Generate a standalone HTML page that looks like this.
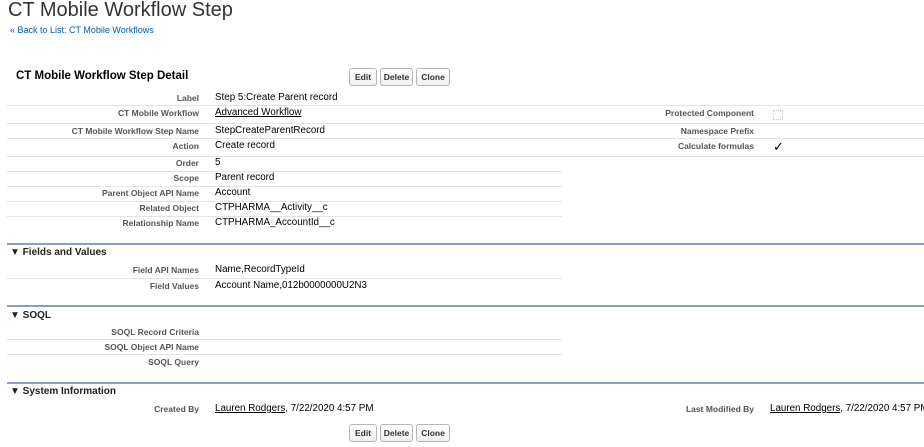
<!DOCTYPE html>
<html><head><style>
body{margin:0;width:924px;height:447px;background:#fff;font-family:"Liberation Sans",Arial,sans-serif;position:relative;overflow:hidden}
div,a,span{position:absolute;white-space:nowrap}
.t{left:8px;top:-1px;font-size:20px;color:#333}
.bk{left:10px;top:25px;font-size:9px;color:#015ba7}
.h{font-size:11.5px;font-weight:bold;color:#000}
.btn{height:16px;border:1px solid #b5b5b5;border-radius:3px;background:linear-gradient(#fff,#f0f0f0);font-size:8.5px;font-weight:bold;color:#333;text-align:center;line-height:16px;box-sizing:content-box}
.l{font-size:8.5px;font-weight:bold;color:#555;text-align:right}
.v{font-size:9.8px;color:#000}
.u{text-decoration:underline}
.ln{height:1px;background:#e3e3e7}
.bar{left:7px;right:0;height:2px;background:#8a9ebe}
.sh{left:10px;font-size:10px;font-weight:bold;color:#222}
</style></head><body>
<div class="t">CT Mobile Workflow Step</div>
<div class="bk">« Back to List: CT Mobile Workflows</div>

<div class="h" style="left:16px;top:70px">CT Mobile Workflow Step Detail</div>
<div class="btn" style="left:349px;top:68px;width:26px">Edit</div>
<div class="btn" style="left:380px;top:68px;width:31px">Delete</div>
<div class="btn" style="left:416px;top:68px;width:32px">Clone</div>

<div class="l" style="right:725px;top:93px">Label</div><div class="v" style="left:215px;top:92px">Step 5:Create Parent record</div>
<div class="ln" style="left:7px;right:0;top:105px"></div>
<div class="l" style="right:725px;top:108px">CT Mobile Workflow</div><div class="v u" style="left:215px;top:107px">Advanced Workflow</div>
<div class="l" style="right:170px;top:108px">Protected Component</div>
<div style="left:773px;top:110px;width:8px;height:8px;border:1px dotted #ccc"></div>
<div class="ln" style="left:7px;right:0;top:123px"></div>
<div class="l" style="right:725px;top:126px">CT Mobile Workflow Step Name</div><div class="v" style="left:215px;top:125px">StepCreateParentRecord</div>
<div class="l" style="right:170px;top:126px">Namespace Prefix</div>
<div class="ln" style="left:7px;right:0;top:138px"></div>
<div class="l" style="right:725px;top:141px">Action</div><div class="v" style="left:215px;top:140px">Create record</div>
<div class="l" style="right:170px;top:141px">Calculate formulas</div>
<div style="left:773px;top:139px;font-size:13px;color:#000">✓</div>
<div class="ln" style="left:7px;right:0;top:156px"></div>
<div class="l" style="right:725px;top:158px">Order</div><div class="v" style="left:215px;top:157px">5</div>
<div class="ln" style="left:7px;width:555px;top:171px"></div>
<div class="l" style="right:725px;top:173px">Scope</div><div class="v" style="left:215px;top:172px">Parent record</div>
<div class="ln" style="left:7px;width:555px;top:186px"></div>
<div class="l" style="right:725px;top:188px">Parent Object API Name</div><div class="v" style="left:215px;top:187px">Account</div>
<div class="ln" style="left:7px;width:555px;top:201px"></div>
<div class="l" style="right:725px;top:203px">Related Object</div><div class="v" style="left:215px;top:202px">CTPHARMA__Activity__c</div>
<div class="ln" style="left:7px;width:555px;top:216px"></div>
<div class="l" style="right:725px;top:218px">Relationship Name</div><div class="v" style="left:215px;top:217px">CTPHARMA_AccountId__c</div>

<div class="bar" style="top:243px"></div>
<div class="sh" style="top:247px">▼ Fields and Values</div>
<div class="l" style="right:725px;top:265px">Field API Names</div><div class="v" style="left:215px;top:264px">Name,RecordTypeId</div>
<div class="ln" style="left:7px;width:555px;top:278px"></div>
<div class="l" style="right:725px;top:281px">Field Values</div><div class="v" style="left:215px;top:280px">Account Name,012b0000000U2N3</div>

<div class="bar" style="top:305px"></div>
<div class="sh" style="top:310px">▼ SOQL</div>
<div class="l" style="right:725px;top:327px">SOQL Record Criteria</div>
<div class="ln" style="left:7px;width:555px;top:339px"></div>
<div class="l" style="right:725px;top:342px">SOQL Object API Name</div>
<div class="ln" style="left:7px;width:555px;top:354px"></div>
<div class="l" style="right:725px;top:357px">SOQL Query</div>

<div class="bar" style="top:382px"></div>
<div class="sh" style="top:386px">▼ System Information</div>
<div class="l" style="right:725px;top:404px">Created By</div><div class="v" style="left:215px;top:403px"><span class="u" style="position:static">Lauren Rodgers</span>, 7/22/2020 4:57 PM</div>
<div class="l" style="right:170px;top:404px">Last Modified By</div><div class="v" style="left:770px;top:403px"><span class="u" style="position:static">Lauren Rodgers</span>, 7/22/2020 4:57 PM</div>

<div class="btn" style="left:349px;top:424px;width:26px">Edit</div>
<div class="btn" style="left:380px;top:424px;width:31px">Delete</div>
<div class="btn" style="left:416px;top:424px;width:32px">Clone</div>
</body></html>
